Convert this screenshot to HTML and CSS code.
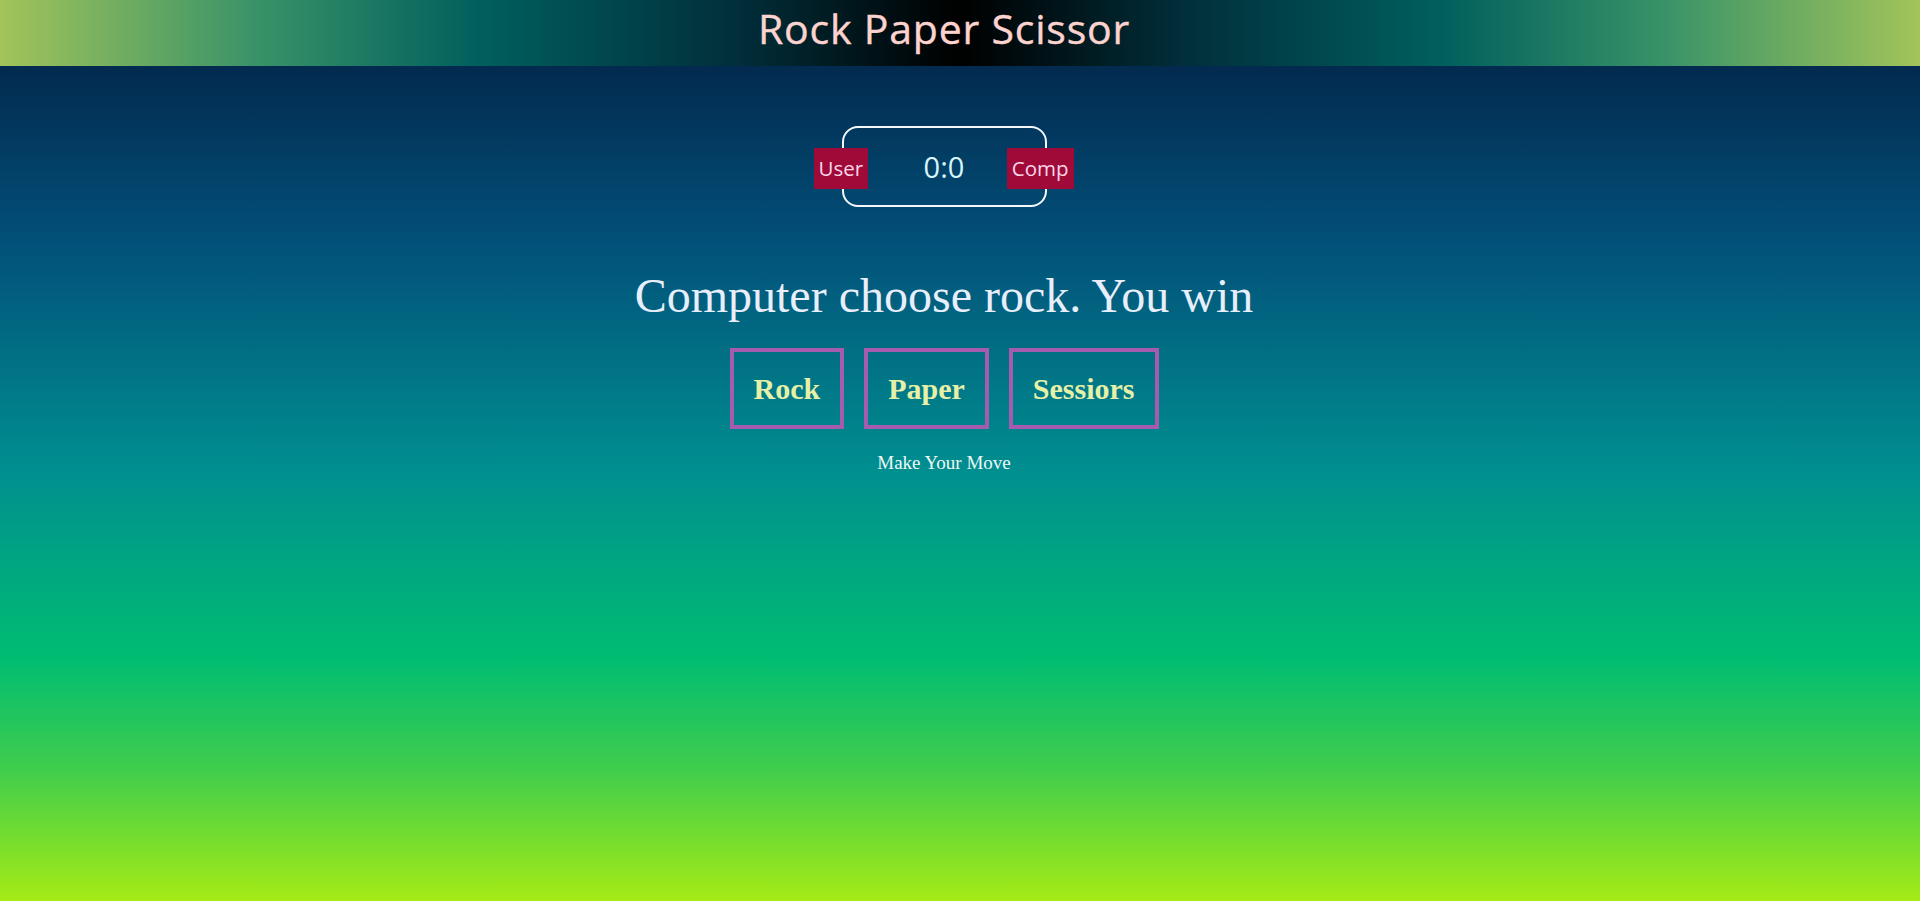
FILE: index.html
```html
<!DOCTYPE html>
<html lang="en">
<head>
<meta charset="utf-8">
<title>Rock Paper Scissor</title>
<link rel="stylesheet" href="styles.css">
</head>
<body>
<header class="topbar">
  <h1 class="title">Rock Paper Scissor</h1>
</header>
<main class="game">
  <div class="scoreboard">
    <span class="badge badge-user">User</span>
    <span class="score">0:0</span>
    <span class="badge badge-comp">Comp</span>
  </div>
  <p class="message">Computer choose rock. You win</p>
  <div class="choices">
    <button class="choice">Rock</button>
    <button class="choice">Paper</button>
    <button class="choice">Sessiors</button>
  </div>
  <p class="hint">Make Your Move</p>
</main>
</body>
</html>
```

FILE: styles.css
```css
html, body {
  margin: 0;
  padding: 0;
}

body {
  min-height: 100vh;
  display: flex;
  flex-direction: column;
  background: #a5eb15;
}

.topbar {
  height: 66px;
  box-sizing: border-box;
  padding-right: 32px;
  display: flex;
  justify-content: center;
  align-items: flex-start;
  background: linear-gradient(90deg, #a2c45a 0%, #3b9468 13%, #005f5d 25%, #01303c 38%, #000000 50%, #01303c 62%, #005f5d 75%, #3b9468 87%, #a2c45a 100%);
}

.title {
  margin: 0;
  font-family: "Open Sans", "Noto Sans", sans-serif;
  font-weight: 400;
  font-size: 41px;
  letter-spacing: 0.8px;
  line-height: 56px;
  color: #fdd3cf;
  -webkit-text-stroke: 0.4px #fdd3cf;
}

.game {
  flex: 1;
  padding: 60px 32px 0 0;
  display: flex;
  flex-direction: column;
  align-items: center;
  background: linear-gradient(180deg, #032a4f 0%, #025079 21%, #008e90 48%, #00bd72 71%, #3fcd4d 84%, #a5eb15 100%);
}

.scoreboard {
  width: 205px;
  height: 81px;
  box-sizing: border-box;
  border: 2px solid #f4f8fb;
  border-radius: 16px;
  display: grid;
  grid-template-columns: 1fr auto 1fr;
  align-items: center;
}

.badge {
  font-family: "Open Sans", "Noto Sans", sans-serif;
  font-size: 20.5px;
  line-height: 41px;
  padding: 0 5px;
  margin-top: 4px;
  background: #a00a38;
  color: #fad6ea;
}

.badge-user {
  justify-self: start;
  margin-left: -30px;
}

.badge-comp {
  justify-self: end;
  margin-right: -29px;
}

.score {
  font-family: "Open Sans", "Noto Sans", sans-serif;
  font-size: 29px;
  color: #d6f5fb;
}

.message {
  margin: 61px 0 0;
  font-family: "Liberation Serif", serif;
  font-size: 48px;
  line-height: 56px;
  color: #e8eefb;
}

.choices {
  margin-top: 24px;
  display: flex;
  gap: 20px;
}

.choice {
  font-family: "Liberation Serif", serif;
  font-weight: 700;
  font-size: 30px;
  line-height: 35px;
  padding: 19px 20px;
  border: 4px solid #a55cae;
  background: transparent;
  color: #e6f0a6;
  cursor: pointer;
}

.hint {
  margin: 23px 0 0;
  font-family: "Liberation Serif", serif;
  font-size: 19px;
  color: #eef8f6;
}
```
